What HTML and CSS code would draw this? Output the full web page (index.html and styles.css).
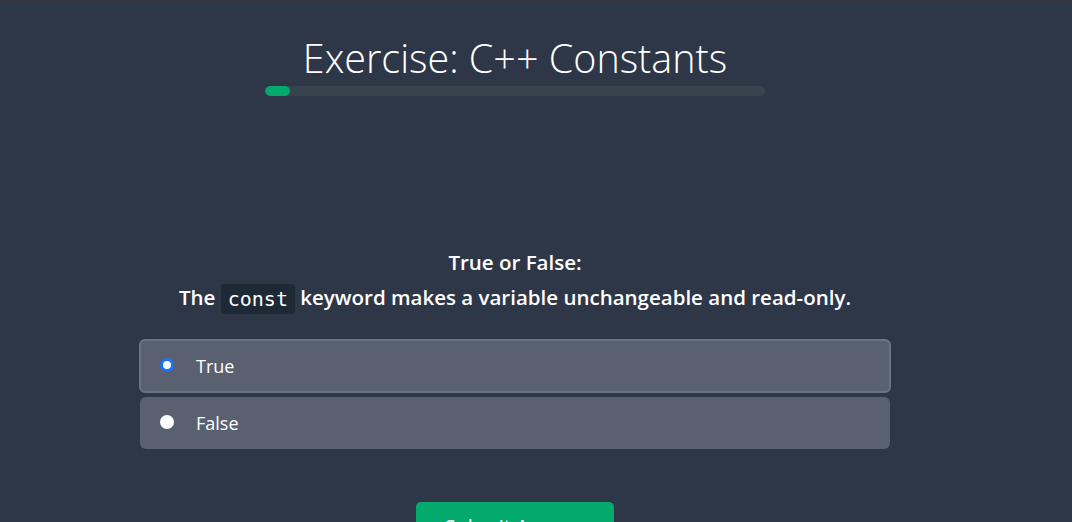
FILE: index.html
```html
<!DOCTYPE html>
<html>
<head>
<meta charset="utf-8">
<link rel="stylesheet" href="styles.css">
</head>
<body>
<div class="topline"></div>
<div class="page">
  <header class="head">
    <h1 class="title">Exercise: C++ Constants</h1>
    <div class="progress"><div class="progress-fill" style="width:25px"></div></div>
  </header>
  <section class="question">
    <p class="q-title">True or False:</p>
    <p class="q-text">The <code class="code">const</code> keyword makes a variable unchangeable and read-only.</p>
  </section>
  <div class="options">
    <label class="option selected">
      <span class="radio checked"></span>
      <span class="opt-label">True</span>
    </label>
    <label class="option">
      <span class="radio"></span>
      <span class="opt-label">False</span>
    </label>
  </div>
  <div class="actions">
    <button class="submit">Submit Answer</button>
  </div>
</div>
</body>
</html>
```

FILE: styles.css
```css
html, body {
  margin: 0;
  padding: 0;
  background: #2e3748;
  height: 100%;
  overflow: hidden;
}
body {
  font-family: "Open Sans", "Noto Sans", sans-serif;
  color: #ffffff;
}
.topline {
  height: 2px;
  background: #37333b;
}
.page {
  width: 1030px;
  display: flex;
  flex-direction: column;
  align-items: center;
}
.head {
  display: flex;
  flex-direction: column;
  align-items: center;
  padding-top: 33px;
}
.title {
  margin: 0;
  font-family: "Open Sans", sans-serif;
  font-weight: 300;
  font-size: 39.5px;
  line-height: 46px;
}
.progress {
  margin-top: 5px;
  width: 500px;
  height: 10px;
  border-radius: 5px;
  background: #38444d;
  overflow: hidden;
}
.progress-fill {
  height: 100%;
  background: #04aa6d;
  border-radius: 5px;
}
.question {
  margin-top: 151px;
  text-align: center;
}
.q-title {
  margin: 0;
  font-weight: 600;
  font-size: 20.5px;
  line-height: 30px;
}
.q-text {
  margin: 5px 0 0;
  font-weight: 600;
  font-size: 20.5px;
  line-height: 30px;
}
.code {
  display: inline-block;
  font-family: "DejaVu Sans Mono", monospace;
  font-weight: 400;
  font-size: 20px;
  line-height: 26px;
  background: #1d2a35;
  padding: 2px 7px;
  border-radius: 3px;
  vertical-align: -1px;
}
.options {
  margin-top: 25px;
  width: 752px;
  display: flex;
  flex-direction: column;
  gap: 4px;
}
.option {
  display: flex;
  align-items: center;
  height: 52px;
  margin: 0 1px;
  padding: 0 20px;
  background: #596170;
  border-radius: 6px;
  font-size: 18px;
  box-sizing: border-box;
}
.option.selected {
  height: 54px;
  margin: 0;
  border: 2px solid #6c7382;
  padding: 0 19px;
}
.radio {
  width: 14px;
  height: 14px;
  border-radius: 50%;
  background: #ffffff;
  box-sizing: border-box;
  margin-top: -2px;
  flex: none;
}
.radio.checked {
  border: 3px solid #1a73f0;
  background: #ffffff;
}
.opt-label {
  margin-left: 22px;
}
.actions {
  margin-top: 53px;
}
.submit {
  display: block;
  width: 198px;
  border: none;
  border-radius: 5px;
  background: #04aa6d;
  color: #fff;
  font-family: inherit;
  font-size: 20px;
  line-height: 28px;
  padding: 11px 0 11px;
}
```
